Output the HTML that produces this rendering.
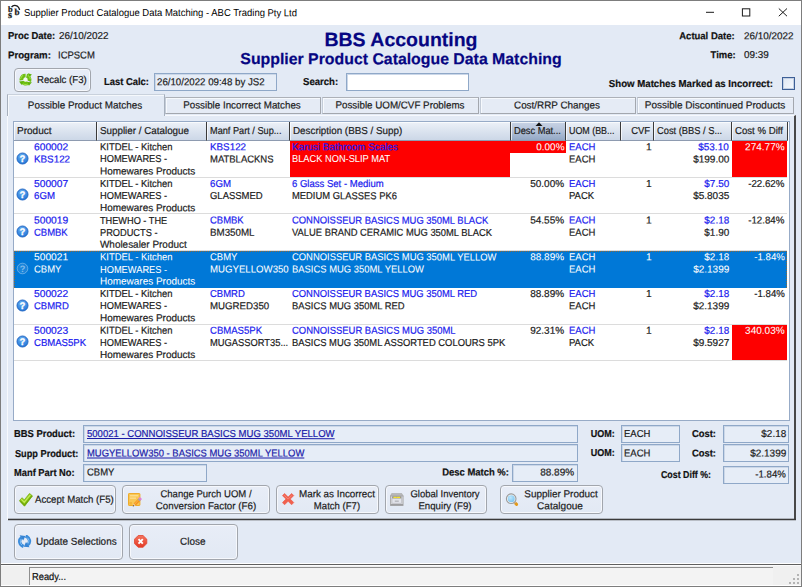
<!DOCTYPE html>
<html>
<head>
<meta charset="utf-8">
<title>Supplier Product Catalogue Data Matching - ABC Trading Pty Ltd</title>
<style>
*{box-sizing:border-box;margin:0;padding:0}
html,body{width:802px;height:587px;overflow:hidden;background:#6b6b6b}
body{font-family:"Liberation Sans",sans-serif;font-size:10.05px;color:#1c1c1c;text-rendering:geometricPrecision;-webkit-text-stroke:0.2px;position:relative}
.abs{position:absolute;white-space:nowrap}
#win{position:absolute;left:0;top:0;width:802px;height:587px;background:#e3eaf5;border:1px solid #7d7d7d}
#titlebar{position:absolute;left:1px;top:1px;width:800px;height:23.6px;background:#fff}
.ttl{color:#000;-webkit-text-stroke:0}
.b{font-weight:bold;color:#111}
.navy{color:#060682}
.blue{color:#1a1aee}
.wht{color:#fff;-webkit-text-stroke:0.05px}
.lnk{color:#1a1aa8;text-decoration:underline}
.stat{color:#111}
.fld{border:1px solid #8fa8c8;background:#e6edf7;box-shadow:inset 1px 1px 0 #cbd7e8}
.btn{border:1px solid #a2a6ad;border-radius:4px;background:linear-gradient(#e8edf7,#e2e9f4);box-shadow:inset 0 0 0 1px #f6f8fc}
.tab{border:1px solid #a3a7ae;border-top-color:#adb1b8;border-left-color:#c4ccd8;background:#e5ebf5;box-shadow:inset 1px 1px 0 #f6f9fd}
</style>
</head>
<body>
<div id="win"></div>
<div id="titlebar"></div>
<svg class="abs" style="left:0px;top:0px" width="24" height="24" viewBox="0 0 24 24"><g font-family="Liberation Serif,serif" font-weight="bold" fill="#1a1a1a" stroke="#1a1a1a" stroke-width="0.25"><text x="8.0" y="11.6" font-size="8.3">b</text><text x="8.0" y="17.6" font-size="10.4">s</text><text x="14.5" y="15.3" font-size="9.1">b</text></g><path d="M11.5 7.2 C13.4 4.4 18.6 4.6 19.6 10" stroke="#1a1a1a" stroke-width="1.3" fill="none"/></svg>
<div class="abs ttl" style="top:8px;line-height:12px;left:24.40px;transform:translateY(0.00px) rotate(0.03deg) scaleX(0.9419);transform-origin:0 0;">Supplier Product Catalogue Data Matching - ABC Trading Pty Ltd</div>
<svg class="abs" style="left:690px;top:0px" width="110" height="24" viewBox="0 0 110 24"><path d="M16 12.3 H24" stroke="#1a1a1a" stroke-width="1"/><rect x="52.4" y="8.8" width="7.4" height="7.2" fill="none" stroke="#1a1a1a" stroke-width="1"/><path d="M88.8 8.5 L97 16.2 M97 8.5 L88.8 16.2" stroke="#1a1a1a" stroke-width="1"/></svg>
<div class="abs b" style="top:31px;line-height:12px;left:7.80px;transform:translateY(0.00px) rotate(0.03deg) scaleX(0.9370);transform-origin:0 0;">Proc Date:</div>
<div class="abs " style="top:31px;line-height:12px;left:58.80px;transform:translateY(0.00px) rotate(0.03deg) scaleX(0.9854);transform-origin:0 0;">26/10/2022</div>
<div class="abs b" style="top:50px;line-height:12px;left:7.80px;transform:translateY(0.40px) rotate(0.03deg) scaleX(0.9599);transform-origin:0 0;">Program:</div>
<div class="abs " style="top:50px;line-height:12px;left:58.40px;transform:translateY(0.40px) rotate(0.03deg) scaleX(0.9430);transform-origin:0 0;">ICPSCM</div>
<div class="abs b navy" style="top:29px;line-height:23px;font-size:19.5px;left:200.90px;width:400px;text-align:center;transform:translateY(0.20px) rotate(0.03deg) scaleX(1.0000);transform-origin:50% 0;">BBS Accounting</div>
<div class="abs b navy" style="top:50px;line-height:19px;font-size:15.85px;left:201.20px;width:400px;text-align:center;transform:translateY(0.20px) rotate(0.03deg) scaleX(1.0000);transform-origin:50% 0;">Supplier Product Catalogue Data Matching</div>
<div class="abs b" style="top:31px;line-height:12px;right:67.50px;transform:translateY(0.30px) rotate(0.03deg) scaleX(0.9443);transform-origin:100% 0;">Actual Date:</div>
<div class="abs " style="top:31px;line-height:12px;left:744.00px;transform:translateY(0.30px) rotate(0.03deg) scaleX(0.9854);transform-origin:0 0;">26/10/2022</div>
<div class="abs b" style="top:50px;line-height:12px;right:66.00px;transform:translateY(0.30px) rotate(0.03deg) scaleX(0.9394);transform-origin:100% 0;">Time:</div>
<div class="abs " style="top:50px;line-height:12px;left:744.00px;transform:translateY(0.00px) rotate(0.03deg) scaleX(0.9854);transform-origin:0 0;">09:39</div>
<div class="btn" style="position:absolute;left:14px;top:68px;width:77px;height:24px;"></div>
<svg class="abs" style="left:18.8px;top:72.8px" width="14" height="14" viewBox="0 0 14 14"><circle cx="6.5" cy="6.6" r="2.2" fill="#f4f8ee"/><circle cx="6.5" cy="6.6" r="4.1" fill="none" stroke="#6dbf12" stroke-width="3.7" stroke-dasharray="6.9 1.69" transform="rotate(-75 6.5 6.6)"/><g fill="#5fb20a"><path d="M9.0 0.3 L12.9 1.6 L10.0 4.6 Z"/><path d="M12.9 9.2 L9.9 12.8 L8.3 9.0 Z"/><path d="M0.1 8.6 L4.2 8.0 L2.6 12.0 Z"/></g><circle cx="6.5" cy="6.6" r="4.9" fill="none" stroke="#a9e454" stroke-width="0.9" stroke-dasharray="4.5 5.76" transform="rotate(-60 6.5 6.6)" opacity="0.9"/></svg>
<div class="abs " style="top:75px;line-height:12px;left:36.60px;transform:translateY(0.00px) rotate(0.03deg) scaleX(0.9571);transform-origin:0 0;">Recalc (F3)</div>
<div class="abs b" style="top:77px;line-height:12px;left:103.50px;transform:translateY(0.00px) rotate(0.03deg) scaleX(0.9351);transform-origin:0 0;">Last Calc:</div>
<div class="fld" style="position:absolute;left:154px;top:73px;width:123px;height:18px;"></div>
<div class="abs " style="top:77px;line-height:12px;left:157.00px;transform:translateY(0.20px) rotate(0.03deg) scaleX(0.9637);transform-origin:0 0;">26/10/2022 09:48 by JS2</div>
<div class="abs b" style="top:77px;line-height:12px;left:303.00px;transform:translateY(0.00px) rotate(0.03deg) scaleX(0.9529);transform-origin:0 0;">Search:</div>
<div class="fld" style="position:absolute;left:346px;top:73px;width:123px;height:18px;background:#fff"></div>
<div class="abs b" style="top:79px;line-height:12px;right:28.70px;transform:translateY(0.00px) rotate(0.03deg) scaleX(0.9599);transform-origin:100% 0;">Show Matches Marked as Incorrect:</div>
<div class="" style="position:absolute;left:782px;top:77px;width:13px;height:13px;border:1px solid #3d5f96;background:linear-gradient(135deg,#dfe7f2,#f6f9fd);box-shadow:inset 0 0 0 1px #c3d0e3"></div>
<div class="" style="position:absolute;left:7px;top:115px;width:789px;height:405px;border-left:1px solid #f7f9fd;border-top:1px solid #f7f9fd;border-right:2px solid #484848;"></div>
<div class="" style="position:absolute;left:8px;top:518px;width:788px;height:1px;background:rgba(60,60,60,.3)"></div>
<div class="" style="position:absolute;left:8px;top:519px;width:788px;height:1px;background:#3a3a3a"></div>
<div class="" style="position:absolute;left:8px;top:520px;width:788px;height:1px;background:rgba(60,60,60,.25)"></div>
<div class="" style="position:absolute;left:7px;top:94px;width:158px;height:22px;border:1px solid #a7b0bd;border-bottom:none;border-top-color:#c9d1dc;background:#e3eaf5;box-shadow:inset 1px 1px 0 #f5f8fc"></div>
<div class="abs " style="top:100px;line-height:12px;left:-114.70px;width:400px;text-align:center;transform:translateY(0.60px) rotate(0.03deg) scaleX(0.9840);transform-origin:50% 0;">Possible Product Matches</div>
<div class="tab" style="position:absolute;left:165px;top:97px;width:156px;height:17px;"></div>
<div class="abs " style="top:100px;line-height:12px;left:42.30px;width:400px;text-align:center;transform:translateY(0.40px) rotate(0.03deg) scaleX(0.9741);transform-origin:50% 0;">Possible Incorrect Matches</div>
<div class="tab" style="position:absolute;left:322px;top:97px;width:157px;height:17px;"></div>
<div class="abs " style="top:100px;line-height:12px;left:199.90px;width:400px;text-align:center;transform:translateY(0.40px) rotate(0.03deg) scaleX(0.9748);transform-origin:50% 0;">Possible UOM/CVF Problems</div>
<div class="tab" style="position:absolute;left:480px;top:97px;width:156px;height:17px;"></div>
<div class="abs " style="top:100px;line-height:12px;left:357.40px;width:400px;text-align:center;transform:translateY(0.40px) rotate(0.03deg) scaleX(0.9829);transform-origin:50% 0;">Cost/RRP Changes</div>
<div class="tab" style="position:absolute;left:637px;top:97px;width:157px;height:17px;"></div>
<div class="abs " style="top:100px;line-height:12px;left:514.70px;width:400px;text-align:center;transform:translateY(0.40px) rotate(0.03deg) scaleX(0.9944);transform-origin:50% 0;">Possible Discontinued Products</div>
<div class="" style="position:absolute;left:13px;top:121px;width:777px;height:300px;background:#fff;border:1px solid #97abc7"></div>
<div class="" style="position:absolute;left:14px;top:122px;width:83px;height:19px;background:linear-gradient(#edf1f8 0%,#dde5f0 45%,#ccd7e7 100%);border-right:1px solid #3a3a3a;border-bottom:1px solid #8e9bb0;box-shadow:inset 1px 1px 0 rgba(255,255,255,.7)"></div>
<div class="abs " style="top:126px;line-height:12px;left:17.40px;transform:translateY(0.00px) rotate(0.03deg) scaleX(0.9978);transform-origin:0 0;">Product</div>
<div class="" style="position:absolute;left:97px;top:122px;width:110px;height:19px;background:linear-gradient(#edf1f8 0%,#dde5f0 45%,#ccd7e7 100%);border-right:1px solid #3a3a3a;border-bottom:1px solid #8e9bb0;box-shadow:inset 1px 1px 0 rgba(255,255,255,.7)"></div>
<div class="abs " style="top:126px;line-height:12px;left:100.40px;transform:translateY(0.00px) rotate(0.03deg) scaleX(0.9775);transform-origin:0 0;">Supplier / Catalogue</div>
<div class="" style="position:absolute;left:207px;top:122px;width:83px;height:19px;background:linear-gradient(#edf1f8 0%,#dde5f0 45%,#ccd7e7 100%);border-right:1px solid #3a3a3a;border-bottom:1px solid #8e9bb0;box-shadow:inset 1px 1px 0 rgba(255,255,255,.7)"></div>
<div class="abs " style="top:126px;line-height:12px;left:210.40px;transform:translateY(0.00px) rotate(0.03deg) scaleX(0.9143);transform-origin:0 0;">Manf Part / Sup...</div>
<div class="" style="position:absolute;left:290px;top:122px;width:221px;height:19px;background:linear-gradient(#edf1f8 0%,#dde5f0 45%,#ccd7e7 100%);border-right:1px solid #3a3a3a;border-bottom:1px solid #8e9bb0;box-shadow:inset 1px 1px 0 rgba(255,255,255,.7)"></div>
<div class="abs " style="top:126px;line-height:12px;left:293.40px;transform:translateY(0.00px) rotate(0.03deg) scaleX(0.9777);transform-origin:0 0;">Description (BBS / Supp)</div>
<div class="" style="position:absolute;left:511px;top:122px;width:55px;height:19px;background:linear-gradient(#c8d3e5 0%,#b3c1d8 50%,#93a8c5 100%);border-right:1px solid #3a3a3a;border-bottom:1px solid #8e9bb0;box-shadow:inset 1px 1px 0 rgba(255,255,255,.7)"></div>
<div class="abs " style="top:126px;line-height:12px;left:514.40px;transform:translateY(0.00px) rotate(0.03deg) scaleX(0.9217);transform-origin:0 0;">Desc Mat...</div>
<div class="" style="position:absolute;left:566px;top:122px;width:55px;height:19px;background:linear-gradient(#edf1f8 0%,#dde5f0 45%,#ccd7e7 100%);border-right:1px solid #3a3a3a;border-bottom:1px solid #8e9bb0;box-shadow:inset 1px 1px 0 rgba(255,255,255,.7)"></div>
<div class="abs " style="top:126px;line-height:12px;left:569.40px;transform:translateY(0.00px) rotate(0.03deg) scaleX(0.8841);transform-origin:0 0;">UOM (BB...</div>
<div class="" style="position:absolute;left:621px;top:122px;width:33px;height:19px;background:linear-gradient(#edf1f8 0%,#dde5f0 45%,#ccd7e7 100%);border-right:1px solid #3a3a3a;border-bottom:1px solid #8e9bb0;box-shadow:inset 1px 1px 0 rgba(255,255,255,.7)"></div>
<div class="abs " style="top:126px;line-height:12px;right:152.20px;transform:translateY(0.00px) rotate(0.03deg) scaleX(0.9430);transform-origin:100% 0;">CVF</div>
<div class="" style="position:absolute;left:654px;top:122px;width:78px;height:19px;background:linear-gradient(#edf1f8 0%,#dde5f0 45%,#ccd7e7 100%);border-right:1px solid #3a3a3a;border-bottom:1px solid #8e9bb0;box-shadow:inset 1px 1px 0 rgba(255,255,255,.7)"></div>
<div class="abs " style="top:126px;line-height:12px;left:657.40px;transform:translateY(0.00px) rotate(0.03deg) scaleX(0.9267);transform-origin:0 0;">Cost (BBS / S...</div>
<div class="" style="position:absolute;left:732px;top:122px;width:56px;height:19px;background:linear-gradient(#edf1f8 0%,#dde5f0 45%,#ccd7e7 100%);border-right:1px solid #3a3a3a;border-bottom:1px solid #8e9bb0;box-shadow:inset 1px 1px 0 rgba(255,255,255,.7)"></div>
<div class="abs " style="top:126px;line-height:12px;left:735.40px;transform:translateY(0.00px) rotate(0.03deg) scaleX(0.9586);transform-origin:0 0;">Cost % Diff</div>
<svg class="abs" style="left:535px;top:122px" width="8" height="4" viewBox="0 0 8 4"><path d="M0.5 4 L4 0.3 L7.5 4 Z" fill="#111"/></svg>
<div style="position:absolute;left:14px;top:176.7px;width:773px;height:1px;background:#dcdcdc"></div>
<div style="position:absolute;left:290px;top:141.0px;width:220px;height:35.7px;background:#fe0000"></div>
<div style="position:absolute;left:510px;top:141.0px;width:56px;height:12px;background:#fe0000"></div>
<div style="position:absolute;left:732px;top:141.0px;width:55px;height:35.7px;background:#fe0000"></div>
<svg class="abs" style="left:15.5px;top:151.7px" width="13" height="13" viewBox="0 0 13 13"><defs><radialGradient id="qg" cx="0.45" cy="0.3" r="0.75"><stop offset="0" stop-color="#6db3f2"/><stop offset="1" stop-color="#1c72d6"/></radialGradient></defs><circle cx="6.5" cy="6.5" r="5.5" fill="url(#qg)" stroke="#2468c4" stroke-width="1"/><text x="6.5" y="9.9" text-anchor="middle" font-family="Liberation Sans,sans-serif" font-size="9.5" font-weight="bold" fill="#fff" stroke="#fff" stroke-width="0.3">?</text></svg>
<div class="abs blue" style="top:142px;line-height:12px;left:34.00px;transform:translateY(0.20px) rotate(0.03deg) scaleX(1.0210);transform-origin:0 0;">600002</div>
<div class="abs blue" style="top:154px;line-height:12px;left:34.00px;transform:translateY(0.40px) rotate(0.03deg) scaleX(0.9785);transform-origin:0 0;">KBS122</div>
<div class="abs " style="top:142px;line-height:12px;left:99.60px;transform:translateY(0.20px) rotate(0.03deg) scaleX(0.9385);transform-origin:0 0;">KITDEL - Kitchen</div>
<div class="abs " style="top:154px;line-height:12px;left:99.60px;transform:translateY(0.40px) rotate(0.03deg) scaleX(0.9226);transform-origin:0 0;">HOMEWARES -</div>
<div class="abs " style="top:166px;line-height:12px;left:99.60px;transform:translateY(0.40px) rotate(0.03deg) scaleX(0.9921);transform-origin:0 0;">Homewares Products</div>
<div class="abs blue" style="top:142px;line-height:12px;left:209.60px;transform:translateY(0.20px) rotate(0.03deg) scaleX(0.9785);transform-origin:0 0;">KBS122</div>
<div class="abs " style="top:154px;line-height:12px;left:209.60px;transform:translateY(0.40px) rotate(0.03deg) scaleX(0.9430);transform-origin:0 0;">MATBLACKNS</div>
<div class="abs blue" style="top:142px;line-height:12px;left:292.30px;transform:translateY(0.20px) rotate(0.03deg) scaleX(0.9822);transform-origin:0 0;">Karusi Bathroom Scales</div>
<div class="abs wht" style="top:154px;line-height:12px;left:292.30px;transform:translateY(0.40px) rotate(0.03deg) scaleX(0.9228);transform-origin:0 0;">BLACK NON-SLIP MAT</div>
<div class="abs wht" style="top:142px;line-height:12px;right:237.50px;transform:translateY(0.20px) rotate(0.03deg) scaleX(0.9895);transform-origin:100% 0;">0.00%</div>
<div class="abs blue" style="top:142px;line-height:12px;left:569.00px;transform:translateY(0.20px) rotate(0.03deg) scaleX(0.9430);transform-origin:0 0;">EACH</div>
<div class="abs " style="top:154px;line-height:12px;left:569.00px;transform:translateY(0.40px) rotate(0.03deg) scaleX(0.9430);transform-origin:0 0;">EACH</div>
<div class="abs " style="top:142px;line-height:12px;right:150.70px;transform:translateY(0.20px) rotate(0.03deg) scaleX(1.0210);transform-origin:100% 0;">1</div>
<div class="abs blue" style="top:142px;line-height:12px;right:73.00px;transform:translateY(0.20px) rotate(0.03deg) scaleX(0.9918);transform-origin:100% 0;">$53.10</div>
<div class="abs " style="top:154px;line-height:12px;right:73.00px;transform:translateY(0.40px) rotate(0.03deg) scaleX(0.9963);transform-origin:100% 0;">$199.00</div>
<div class="abs wht" style="top:142px;line-height:12px;right:17.40px;transform:translateY(0.20px) rotate(0.03deg) scaleX(0.9984);transform-origin:100% 0;">274.77%</div>
<div style="position:absolute;left:14px;top:213.4px;width:773px;height:1px;background:#dcdcdc"></div>
<svg class="abs" style="left:15.5px;top:188.4px" width="13" height="13" viewBox="0 0 13 13"><defs><radialGradient id="qg" cx="0.45" cy="0.3" r="0.75"><stop offset="0" stop-color="#6db3f2"/><stop offset="1" stop-color="#1c72d6"/></radialGradient></defs><circle cx="6.5" cy="6.5" r="5.5" fill="url(#qg)" stroke="#2468c4" stroke-width="1"/><text x="6.5" y="9.9" text-anchor="middle" font-family="Liberation Sans,sans-serif" font-size="9.5" font-weight="bold" fill="#fff" stroke="#fff" stroke-width="0.3">?</text></svg>
<div class="abs blue" style="top:178px;line-height:12px;left:34.00px;transform:translateY(0.90px) rotate(0.03deg) scaleX(1.0210);transform-origin:0 0;">500007</div>
<div class="abs blue" style="top:191px;line-height:12px;left:34.00px;transform:translateY(0.10px) rotate(0.03deg) scaleX(0.9630);transform-origin:0 0;">6GM</div>
<div class="abs " style="top:178px;line-height:12px;left:99.60px;transform:translateY(0.90px) rotate(0.03deg) scaleX(0.9385);transform-origin:0 0;">KITDEL - Kitchen</div>
<div class="abs " style="top:191px;line-height:12px;left:99.60px;transform:translateY(0.10px) rotate(0.03deg) scaleX(0.9226);transform-origin:0 0;">HOMEWARES -</div>
<div class="abs " style="top:203px;line-height:12px;left:99.60px;transform:translateY(0.10px) rotate(0.03deg) scaleX(0.9921);transform-origin:0 0;">Homewares Products</div>
<div class="abs blue" style="top:178px;line-height:12px;left:209.60px;transform:translateY(0.90px) rotate(0.03deg) scaleX(0.9630);transform-origin:0 0;">6GM</div>
<div class="abs " style="top:191px;line-height:12px;left:209.60px;transform:translateY(0.10px) rotate(0.03deg) scaleX(0.9430);transform-origin:0 0;">GLASSMED</div>
<div class="abs blue" style="top:178px;line-height:12px;left:292.30px;transform:translateY(0.90px) rotate(0.03deg) scaleX(0.9487);transform-origin:0 0;">6 Glass Set - Medium</div>
<div class="abs " style="top:191px;line-height:12px;left:292.30px;transform:translateY(0.10px) rotate(0.03deg) scaleX(0.9348);transform-origin:0 0;">MEDIUM GLASSES PK6</div>
<div class="abs " style="top:178px;line-height:12px;right:237.50px;transform:translateY(0.90px) rotate(0.03deg) scaleX(0.9947);transform-origin:100% 0;">50.00%</div>
<div class="abs blue" style="top:178px;line-height:12px;left:569.00px;transform:translateY(0.90px) rotate(0.03deg) scaleX(0.9430);transform-origin:0 0;">EACH</div>
<div class="abs " style="top:191px;line-height:12px;left:569.00px;transform:translateY(0.10px) rotate(0.03deg) scaleX(0.9430);transform-origin:0 0;">PACK</div>
<div class="abs " style="top:178px;line-height:12px;right:150.70px;transform:translateY(0.90px) rotate(0.03deg) scaleX(1.0210);transform-origin:100% 0;">1</div>
<div class="abs blue" style="top:178px;line-height:12px;right:73.00px;transform:translateY(0.90px) rotate(0.03deg) scaleX(0.9854);transform-origin:100% 0;">$7.50</div>
<div class="abs " style="top:191px;line-height:12px;right:73.00px;transform:translateY(0.10px) rotate(0.03deg) scaleX(0.9963);transform-origin:100% 0;">$5.8035</div>
<div class="abs " style="top:178px;line-height:12px;right:17.40px;transform:translateY(0.90px) rotate(0.03deg) scaleX(0.9684);transform-origin:100% 0;">-22.62%</div>
<div style="position:absolute;left:14px;top:250.1px;width:773px;height:1px;background:#dcdcdc"></div>
<svg class="abs" style="left:15.5px;top:225.1px" width="13" height="13" viewBox="0 0 13 13"><defs><radialGradient id="qg" cx="0.45" cy="0.3" r="0.75"><stop offset="0" stop-color="#6db3f2"/><stop offset="1" stop-color="#1c72d6"/></radialGradient></defs><circle cx="6.5" cy="6.5" r="5.5" fill="url(#qg)" stroke="#2468c4" stroke-width="1"/><text x="6.5" y="9.9" text-anchor="middle" font-family="Liberation Sans,sans-serif" font-size="9.5" font-weight="bold" fill="#fff" stroke="#fff" stroke-width="0.3">?</text></svg>
<div class="abs blue" style="top:215px;line-height:12px;left:34.00px;transform:translateY(0.60px) rotate(0.03deg) scaleX(1.0210);transform-origin:0 0;">500019</div>
<div class="abs blue" style="top:227px;line-height:12px;left:34.00px;transform:translateY(0.80px) rotate(0.03deg) scaleX(0.9430);transform-origin:0 0;">CBMBK</div>
<div class="abs " style="top:215px;line-height:12px;left:99.60px;transform:translateY(0.60px) rotate(0.03deg) scaleX(0.9136);transform-origin:0 0;">THEWHO - THE</div>
<div class="abs " style="top:227px;line-height:12px;left:99.60px;transform:translateY(0.80px) rotate(0.03deg) scaleX(0.9191);transform-origin:0 0;">PRODUCTS -</div>
<div class="abs " style="top:239px;line-height:12px;left:99.60px;transform:translateY(0.80px) rotate(0.03deg) scaleX(0.9885);transform-origin:0 0;">Wholesaler Product</div>
<div class="abs blue" style="top:215px;line-height:12px;left:209.60px;transform:translateY(0.60px) rotate(0.03deg) scaleX(0.9430);transform-origin:0 0;">CBMBK</div>
<div class="abs " style="top:227px;line-height:12px;left:209.60px;transform:translateY(0.80px) rotate(0.03deg) scaleX(0.9716);transform-origin:0 0;">BM350ML</div>
<div class="abs blue" style="top:215px;line-height:12px;left:292.30px;transform:translateY(0.60px) rotate(0.03deg) scaleX(0.9363);transform-origin:0 0;">CONNOISSEUR BASICS MUG 350ML BLACK</div>
<div class="abs " style="top:227px;line-height:12px;left:292.30px;transform:translateY(0.80px) rotate(0.03deg) scaleX(0.9333);transform-origin:0 0;">VALUE BRAND CERAMIC MUG 350ML BLACK</div>
<div class="abs " style="top:215px;line-height:12px;right:237.50px;transform:translateY(0.60px) rotate(0.03deg) scaleX(0.9947);transform-origin:100% 0;">54.55%</div>
<div class="abs blue" style="top:215px;line-height:12px;left:569.00px;transform:translateY(0.60px) rotate(0.03deg) scaleX(0.9430);transform-origin:0 0;">EACH</div>
<div class="abs " style="top:227px;line-height:12px;left:569.00px;transform:translateY(0.80px) rotate(0.03deg) scaleX(0.9430);transform-origin:0 0;">EACH</div>
<div class="abs " style="top:215px;line-height:12px;right:150.70px;transform:translateY(0.60px) rotate(0.03deg) scaleX(1.0210);transform-origin:100% 0;">1</div>
<div class="abs blue" style="top:215px;line-height:12px;right:73.00px;transform:translateY(0.60px) rotate(0.03deg) scaleX(0.9854);transform-origin:100% 0;">$2.18</div>
<div class="abs " style="top:227px;line-height:12px;right:73.00px;transform:translateY(0.80px) rotate(0.03deg) scaleX(0.9854);transform-origin:100% 0;">$1.90</div>
<div class="abs " style="top:215px;line-height:12px;right:17.40px;transform:translateY(0.60px) rotate(0.03deg) scaleX(0.9684);transform-origin:100% 0;">-12.84%</div>
<div style="position:absolute;left:14px;top:251.1px;width:773px;height:36.7px;background:#0078d7;border-top:1px dotted #8a6a3c;border-left:1px dotted #8a6a3c;border-right:1px dotted #8a6a3c"></div>
<svg class="abs" style="left:15.5px;top:261.8px" width="13" height="13" viewBox="0 0 13 13"><circle cx="6.5" cy="6.5" r="5.3" fill="rgba(255,255,255,0.10)" stroke="rgba(255,255,255,0.33)" stroke-width="1"/><text x="6.5" y="9.8" text-anchor="middle" font-family="Liberation Sans,sans-serif" font-size="9.2" font-weight="bold" fill="rgba(255,255,255,0.45)">?</text></svg>
<div class="abs wht" style="top:252px;line-height:12px;left:34.00px;transform:translateY(0.30px) rotate(0.03deg) scaleX(1.0210);transform-origin:0 0;">500021</div>
<div class="abs wht" style="top:264px;line-height:12px;left:34.00px;transform:translateY(0.50px) rotate(0.03deg) scaleX(0.9430);transform-origin:0 0;">CBMY</div>
<div class="abs wht" style="top:252px;line-height:12px;left:99.60px;transform:translateY(0.30px) rotate(0.03deg) scaleX(0.9385);transform-origin:0 0;">KITDEL - Kitchen</div>
<div class="abs wht" style="top:264px;line-height:12px;left:99.60px;transform:translateY(0.50px) rotate(0.03deg) scaleX(0.9226);transform-origin:0 0;">HOMEWARES -</div>
<div class="abs wht" style="top:276px;line-height:12px;left:99.60px;transform:translateY(0.50px) rotate(0.03deg) scaleX(0.9921);transform-origin:0 0;">Homewares Products</div>
<div class="abs wht" style="top:252px;line-height:12px;left:209.60px;transform:translateY(0.30px) rotate(0.03deg) scaleX(0.9430);transform-origin:0 0;">CBMY</div>
<div class="abs wht" style="top:264px;line-height:12px;left:209.60px;transform:translateY(0.50px) rotate(0.03deg) scaleX(0.9589);transform-origin:0 0;">MUGYELLOW350</div>
<div class="abs wht" style="top:252px;line-height:12px;left:292.30px;transform:translateY(0.30px) rotate(0.03deg) scaleX(0.9366);transform-origin:0 0;">CONNOISSEUR BASICS MUG 350ML YELLOW</div>
<div class="abs wht" style="top:264px;line-height:12px;left:292.30px;transform:translateY(0.50px) rotate(0.03deg) scaleX(0.9379);transform-origin:0 0;">BASICS MUG 350ML YELLOW</div>
<div class="abs wht" style="top:252px;line-height:12px;right:237.50px;transform:translateY(0.30px) rotate(0.03deg) scaleX(0.9947);transform-origin:100% 0;">88.89%</div>
<div class="abs wht" style="top:252px;line-height:12px;left:569.00px;transform:translateY(0.30px) rotate(0.03deg) scaleX(0.9430);transform-origin:0 0;">EACH</div>
<div class="abs wht" style="top:264px;line-height:12px;left:569.00px;transform:translateY(0.50px) rotate(0.03deg) scaleX(0.9430);transform-origin:0 0;">EACH</div>
<div class="abs wht" style="top:252px;line-height:12px;right:150.70px;transform:translateY(0.30px) rotate(0.03deg) scaleX(1.0210);transform-origin:100% 0;">1</div>
<div class="abs wht" style="top:252px;line-height:12px;right:73.00px;transform:translateY(0.30px) rotate(0.03deg) scaleX(0.9854);transform-origin:100% 0;">$2.18</div>
<div class="abs wht" style="top:264px;line-height:12px;right:73.00px;transform:translateY(0.50px) rotate(0.03deg) scaleX(0.9963);transform-origin:100% 0;">$2.1399</div>
<div class="abs wht" style="top:252px;line-height:12px;right:17.40px;transform:translateY(0.30px) rotate(0.03deg) scaleX(0.9591);transform-origin:100% 0;">-1.84%</div>
<div style="position:absolute;left:14px;top:323.5px;width:773px;height:1px;background:#dcdcdc"></div>
<svg class="abs" style="left:15.5px;top:298.5px" width="13" height="13" viewBox="0 0 13 13"><defs><radialGradient id="qg" cx="0.45" cy="0.3" r="0.75"><stop offset="0" stop-color="#6db3f2"/><stop offset="1" stop-color="#1c72d6"/></radialGradient></defs><circle cx="6.5" cy="6.5" r="5.5" fill="url(#qg)" stroke="#2468c4" stroke-width="1"/><text x="6.5" y="9.9" text-anchor="middle" font-family="Liberation Sans,sans-serif" font-size="9.5" font-weight="bold" fill="#fff" stroke="#fff" stroke-width="0.3">?</text></svg>
<div class="abs blue" style="top:289px;line-height:12px;left:34.00px;transform:translateY(0.00px) rotate(0.03deg) scaleX(1.0210);transform-origin:0 0;">500022</div>
<div class="abs blue" style="top:301px;line-height:12px;left:34.00px;transform:translateY(0.20px) rotate(0.03deg) scaleX(0.9430);transform-origin:0 0;">CBMRD</div>
<div class="abs " style="top:289px;line-height:12px;left:99.60px;transform:translateY(0.00px) rotate(0.03deg) scaleX(0.9385);transform-origin:0 0;">KITDEL - Kitchen</div>
<div class="abs " style="top:301px;line-height:12px;left:99.60px;transform:translateY(0.20px) rotate(0.03deg) scaleX(0.9226);transform-origin:0 0;">HOMEWARES -</div>
<div class="abs " style="top:313px;line-height:12px;left:99.60px;transform:translateY(0.20px) rotate(0.03deg) scaleX(0.9921);transform-origin:0 0;">Homewares Products</div>
<div class="abs blue" style="top:289px;line-height:12px;left:209.60px;transform:translateY(0.00px) rotate(0.03deg) scaleX(0.9430);transform-origin:0 0;">CBMRD</div>
<div class="abs " style="top:301px;line-height:12px;left:209.60px;transform:translateY(0.20px) rotate(0.03deg) scaleX(0.9643);transform-origin:0 0;">MUGRED350</div>
<div class="abs blue" style="top:289px;line-height:12px;left:292.30px;transform:translateY(0.00px) rotate(0.03deg) scaleX(0.9359);transform-origin:0 0;">CONNOISSEUR BASICS MUG 350ML RED</div>
<div class="abs " style="top:301px;line-height:12px;left:292.30px;transform:translateY(0.20px) rotate(0.03deg) scaleX(0.9370);transform-origin:0 0;">BASICS MUG 350ML RED</div>
<div class="abs " style="top:289px;line-height:12px;right:237.50px;transform:translateY(0.00px) rotate(0.03deg) scaleX(0.9947);transform-origin:100% 0;">88.89%</div>
<div class="abs blue" style="top:289px;line-height:12px;left:569.00px;transform:translateY(0.00px) rotate(0.03deg) scaleX(0.9430);transform-origin:0 0;">EACH</div>
<div class="abs " style="top:301px;line-height:12px;left:569.00px;transform:translateY(0.20px) rotate(0.03deg) scaleX(0.9430);transform-origin:0 0;">EACH</div>
<div class="abs " style="top:289px;line-height:12px;right:150.70px;transform:translateY(0.00px) rotate(0.03deg) scaleX(1.0210);transform-origin:100% 0;">1</div>
<div class="abs blue" style="top:289px;line-height:12px;right:73.00px;transform:translateY(0.00px) rotate(0.03deg) scaleX(0.9854);transform-origin:100% 0;">$2.18</div>
<div class="abs " style="top:301px;line-height:12px;right:73.00px;transform:translateY(0.20px) rotate(0.03deg) scaleX(0.9963);transform-origin:100% 0;">$2.1399</div>
<div class="abs " style="top:289px;line-height:12px;right:17.40px;transform:translateY(0.00px) rotate(0.03deg) scaleX(0.9591);transform-origin:100% 0;">-1.84%</div>
<div style="position:absolute;left:14px;top:360.2px;width:773px;height:1px;background:#dcdcdc"></div>
<div style="position:absolute;left:732px;top:324.5px;width:55px;height:35.7px;background:#fe0000"></div>
<svg class="abs" style="left:15.5px;top:335.2px" width="13" height="13" viewBox="0 0 13 13"><defs><radialGradient id="qg" cx="0.45" cy="0.3" r="0.75"><stop offset="0" stop-color="#6db3f2"/><stop offset="1" stop-color="#1c72d6"/></radialGradient></defs><circle cx="6.5" cy="6.5" r="5.5" fill="url(#qg)" stroke="#2468c4" stroke-width="1"/><text x="6.5" y="9.9" text-anchor="middle" font-family="Liberation Sans,sans-serif" font-size="9.5" font-weight="bold" fill="#fff" stroke="#fff" stroke-width="0.3">?</text></svg>
<div class="abs blue" style="top:325px;line-height:12px;left:34.00px;transform:translateY(0.70px) rotate(0.03deg) scaleX(1.0210);transform-origin:0 0;">500023</div>
<div class="abs blue" style="top:337px;line-height:12px;left:34.00px;transform:translateY(0.90px) rotate(0.03deg) scaleX(0.9510);transform-origin:0 0;">CBMAS5PK</div>
<div class="abs " style="top:325px;line-height:12px;left:99.60px;transform:translateY(0.70px) rotate(0.03deg) scaleX(0.9385);transform-origin:0 0;">KITDEL - Kitchen</div>
<div class="abs " style="top:337px;line-height:12px;left:99.60px;transform:translateY(0.90px) rotate(0.03deg) scaleX(0.9226);transform-origin:0 0;">HOMEWARES -</div>
<div class="abs " style="top:349px;line-height:12px;left:99.60px;transform:translateY(0.90px) rotate(0.03deg) scaleX(0.9921);transform-origin:0 0;">Homewares Products</div>
<div class="abs blue" style="top:325px;line-height:12px;left:209.60px;transform:translateY(0.70px) rotate(0.03deg) scaleX(0.9510);transform-origin:0 0;">CBMAS5PK</div>
<div class="abs " style="top:337px;line-height:12px;left:209.60px;transform:translateY(0.90px) rotate(0.03deg) scaleX(0.9292);transform-origin:0 0;">MUGASSORT35...</div>
<div class="abs blue" style="top:325px;line-height:12px;left:292.30px;transform:translateY(0.70px) rotate(0.03deg) scaleX(0.9388);transform-origin:0 0;">CONNOISSEUR BASICS MUG 350ML</div>
<div class="abs " style="top:337px;line-height:12px;left:292.30px;transform:translateY(0.90px) rotate(0.03deg) scaleX(0.9358);transform-origin:0 0;">BASICS MUG 350ML ASSORTED COLOURS 5PK</div>
<div class="abs " style="top:325px;line-height:12px;right:237.50px;transform:translateY(0.70px) rotate(0.03deg) scaleX(0.9947);transform-origin:100% 0;">92.31%</div>
<div class="abs blue" style="top:325px;line-height:12px;left:569.00px;transform:translateY(0.70px) rotate(0.03deg) scaleX(0.9430);transform-origin:0 0;">EACH</div>
<div class="abs " style="top:337px;line-height:12px;left:569.00px;transform:translateY(0.90px) rotate(0.03deg) scaleX(0.9430);transform-origin:0 0;">PACK</div>
<div class="abs " style="top:325px;line-height:12px;right:150.70px;transform:translateY(0.70px) rotate(0.03deg) scaleX(1.0210);transform-origin:100% 0;">1</div>
<div class="abs blue" style="top:325px;line-height:12px;right:73.00px;transform:translateY(0.70px) rotate(0.03deg) scaleX(0.9854);transform-origin:100% 0;">$2.18</div>
<div class="abs " style="top:337px;line-height:12px;right:73.00px;transform:translateY(0.90px) rotate(0.03deg) scaleX(0.9963);transform-origin:100% 0;">$9.5927</div>
<div class="abs wht" style="top:325px;line-height:12px;right:17.40px;transform:translateY(0.70px) rotate(0.03deg) scaleX(0.9984);transform-origin:100% 0;">340.03%</div>
<div class="abs b" style="top:429px;line-height:12px;left:14.00px;transform:translateY(0.00px) rotate(0.03deg) scaleX(0.9356);transform-origin:0 0;">BBS Product:</div>
<div class="fld" style="position:absolute;left:83px;top:425px;width:495px;height:18px;"></div>
<div class="abs lnk" style="top:429px;line-height:12px;left:86.80px;transform:translateY(0.00px) rotate(0.03deg) scaleX(0.9495);transform-origin:0 0;">500021 - CONNOISSEUR BASICS MUG 350ML YELLOW</div>
<div class="abs b" style="top:448px;line-height:12px;left:14.50px;transform:translateY(0.50px) rotate(0.03deg) scaleX(0.9145);transform-origin:0 0;">Supp Product:</div>
<div class="fld" style="position:absolute;left:83px;top:444px;width:495px;height:18px;"></div>
<div class="abs lnk" style="top:448px;line-height:12px;left:86.80px;transform:translateY(0.50px) rotate(0.03deg) scaleX(0.9378);transform-origin:0 0;">MUGYELLOW350 - BASICS MUG 350ML YELLOW</div>
<div class="abs b" style="top:467px;line-height:12px;left:14.00px;transform:translateY(0.60px) rotate(0.03deg) scaleX(0.9282);transform-origin:0 0;">Manf Part No:</div>
<div class="fld" style="position:absolute;left:83px;top:464px;width:124px;height:18px;"></div>
<div class="abs " style="top:467px;line-height:12px;left:87.00px;transform:translateY(0.60px) rotate(0.03deg) scaleX(0.9430);transform-origin:0 0;">CBMY</div>
<div class="abs b" style="top:467px;line-height:12px;right:293.40px;transform:translateY(0.60px) rotate(0.03deg) scaleX(0.9409);transform-origin:100% 0;">Desc Match %:</div>
<div class="fld" style="position:absolute;left:512px;top:464px;width:66px;height:18px;"></div>
<div class="abs " style="top:467px;line-height:12px;right:228.00px;transform:translateY(0.60px) rotate(0.03deg) scaleX(0.9947);transform-origin:100% 0;">88.89%</div>
<div class="abs b" style="top:429px;line-height:12px;right:187.60px;transform:translateY(0.00px) rotate(0.03deg) scaleX(0.8962);transform-origin:100% 0;">UOM:</div>
<div class="fld" style="position:absolute;left:621px;top:425px;width:59px;height:18px;"></div>
<div class="abs " style="top:429px;line-height:12px;left:624.40px;transform:translateY(0.00px) rotate(0.03deg) scaleX(0.9430);transform-origin:0 0;">EACH</div>
<div class="abs b" style="top:448px;line-height:12px;right:187.60px;transform:translateY(0.50px) rotate(0.03deg) scaleX(0.8962);transform-origin:100% 0;">UOM:</div>
<div class="fld" style="position:absolute;left:621px;top:444px;width:59px;height:18px;"></div>
<div class="abs " style="top:448px;line-height:12px;left:624.40px;transform:translateY(0.50px) rotate(0.03deg) scaleX(0.9430);transform-origin:0 0;">EACH</div>
<div class="abs b" style="top:429px;line-height:12px;left:692.40px;transform:translateY(0.00px) rotate(0.03deg) scaleX(0.9341);transform-origin:0 0;">Cost:</div>
<div class="fld" style="position:absolute;left:723px;top:425px;width:66px;height:18px;"></div>
<div class="abs " style="top:429px;line-height:12px;right:16.00px;transform:translateY(0.00px) rotate(0.03deg) scaleX(0.9854);transform-origin:100% 0;">$2.18</div>
<div class="abs b" style="top:448px;line-height:12px;left:692.40px;transform:translateY(0.50px) rotate(0.03deg) scaleX(0.9341);transform-origin:0 0;">Cost:</div>
<div class="fld" style="position:absolute;left:723px;top:444px;width:66px;height:18px;"></div>
<div class="abs " style="top:448px;line-height:12px;right:16.00px;transform:translateY(0.50px) rotate(0.03deg) scaleX(0.9963);transform-origin:100% 0;">$2.1399</div>
<div class="abs b" style="top:469px;line-height:12px;left:660.50px;transform:translateY(0.50px) rotate(0.03deg) scaleX(0.8782);transform-origin:0 0;">Cost Diff %:</div>
<div class="fld" style="position:absolute;left:723px;top:466px;width:66px;height:18px;"></div>
<div class="abs " style="top:469px;line-height:12px;right:16.00px;transform:translateY(0.50px) rotate(0.03deg) scaleX(0.9591);transform-origin:100% 0;">-1.84%</div>
<div class="btn" style="position:absolute;left:14px;top:485px;width:102px;height:29px;"></div>
<svg class="abs" style="left:18.9px;top:492.9px" width="14" height="14" viewBox="0 0 14 14"><path d="M0.3 7.7 L3.1 4.7 L5.3 6.9 L10.5 0.4 L13.5 2.9 L5.5 13.2 Z" fill="#8fc814" stroke="#76ad0e" stroke-width="0.7" stroke-linejoin="round"/><path d="M0.9 8.4 L5.5 13.2 L13.5 2.9 L12.6 2.2 L5.4 11.2 L1.6 7.6 Z" fill="#6da40c" opacity="0.85"/><path d="M2.6 6.6 L5.3 9.2 L11 2.4" fill="none" stroke="#c2ea5a" stroke-width="1.3" stroke-linecap="round" stroke-linejoin="round"/></svg>
<div class="abs " style="top:494px;line-height:12px;left:35.40px;transform:translateY(0.80px) rotate(0.03deg) scaleX(0.9598);transform-origin:0 0;">Accept Match (F5)</div>
<div class="btn" style="position:absolute;left:122px;top:485px;width:148px;height:29px;"></div>
<svg class="abs" style="left:128px;top:493.2px" width="15" height="14" viewBox="0 0 15 14"><rect x="0.5" y="0.5" width="11.4" height="12" rx="0.6" fill="#f9c755" stroke="#eeab2c" stroke-width="1"/><rect x="2" y="2.2" width="8.2" height="1.1" fill="#fde29a"/><rect x="2" y="4.6" width="6" height="1.1" fill="#fde29a"/><rect x="1.4" y="9" width="2.6" height="2.6" fill="#f3b63c"/><path d="M5.6 10.6 L10.4 5.4 L12.6 7.4 L7.8 12.6 Z" fill="#f5951d"/><path d="M6.4 11.4 L11.2 6.2" stroke="#fbbf5a" stroke-width="0.8"/><path d="M10.4 5.4 L11.8 3.9 L14 5.9 L12.6 7.4 Z" fill="#e07fd6"/><path d="M9.6 6.3 L10.4 5.4 L12.6 7.4 L11.8 8.3 Z" fill="#98a6ba"/><path d="M5.6 10.6 L7.8 12.6 L4.8 13.4 Z" fill="#e9c9a0"/><path d="M5.2 12.1 L6.2 13.0 L4.8 13.4 Z" fill="#3a3028"/></svg>
<div class="abs " style="top:489px;line-height:12px;left:5.80px;width:400px;text-align:center;transform:translateY(0.20px) rotate(0.03deg) scaleX(0.9484);transform-origin:50% 0;">Change Purch UOM /</div>
<div class="abs " style="top:501px;line-height:12px;left:5.80px;width:400px;text-align:center;transform:translateY(0.20px) rotate(0.03deg) scaleX(0.9714);transform-origin:50% 0;">Conversion Factor (F6)</div>
<div class="btn" style="position:absolute;left:276px;top:485px;width:103px;height:29px;"></div>
<svg class="abs" style="left:282px;top:492.9px" width="13" height="13" viewBox="0 0 13 13"><path d="M0.4 2.6 L2.6 0.4 L6.1 3.9 L9.6 0.4 L11.8 2.6 L8.3 6.1 L11.8 9.6 L9.6 11.8 L6.1 8.3 L2.6 11.8 L0.4 9.6 L3.9 6.1 Z" fill="#f0614e" stroke="#ee4f3e" stroke-width="0.5" stroke-linejoin="round"/><path d="M2.2 2.2 L6.1 6.1 L10 2.2" fill="none" stroke="#f78f7e" stroke-width="1" opacity="0.8"/></svg>
<div class="abs " style="top:489px;line-height:12px;left:136.70px;width:400px;text-align:center;transform:translateY(0.20px) rotate(0.03deg) scaleX(0.9788);transform-origin:50% 0;">Mark as Incorrect</div>
<div class="abs " style="top:501px;line-height:12px;left:136.70px;width:400px;text-align:center;transform:translateY(0.20px) rotate(0.03deg) scaleX(0.9518);transform-origin:50% 0;">Match (F7)</div>
<div class="btn" style="position:absolute;left:385px;top:485px;width:102px;height:29px;"></div>
<svg class="abs" style="left:390.4px;top:493px" width="14" height="14" viewBox="0 0 14 14"><path d="M1.6 0.6 L11.8 0.6 L13.2 3.2 L0.4 3.2 Z" fill="#b9b9ba" stroke="#a3a3a4" stroke-width="0.6"/><rect x="0.5" y="3" width="12.6" height="9.4" fill="#d6d6d9" stroke="#a9a9ab" stroke-width="0.9"/><rect x="2.2" y="3.4" width="9.2" height="2.2" fill="#8c8c8e"/><path d="M3 5.4 L3.6 3.8 L6.4 3.8 L6.8 4.4 L7.2 3.8 L10 3.8 L10.6 5.4 Z" fill="#f4e02e"/><rect x="2" y="5.6" width="9.6" height="4.6" fill="#e3e4ea" stroke="#b7b8be" stroke-width="0.6"/><rect x="4.8" y="7.6" width="4" height="1.1" fill="#a9aab0"/><rect x="0.6" y="11" width="12.4" height="1.6" fill="#9d9d9f"/></svg>
<div class="abs " style="top:489px;line-height:12px;left:245.40px;width:400px;text-align:center;transform:translateY(0.20px) rotate(0.03deg) scaleX(0.9457);transform-origin:50% 0;">Global Inventory</div>
<div class="abs " style="top:501px;line-height:12px;left:245.40px;width:400px;text-align:center;transform:translateY(0.20px) rotate(0.03deg) scaleX(0.9610);transform-origin:50% 0;">Enquiry (F9)</div>
<div class="btn" style="position:absolute;left:500px;top:485px;width:103px;height:29px;"></div>
<svg class="abs" style="left:505.2px;top:492.8px" width="14" height="14" viewBox="0 0 14 14"><defs><radialGradient id="mg" cx="0.4" cy="0.35" r="0.75"><stop offset="0" stop-color="#bfe6fb"/><stop offset="1" stop-color="#74c2f1"/></radialGradient></defs><path d="M10.2 10.0 L11.6 11.4" stroke="#e39a1c" stroke-width="3" stroke-linecap="round"/><path d="M9.0 8.8 L10.2 10" stroke="#c4c4c4" stroke-width="2.2"/><circle cx="6.2" cy="5.7" r="4.8" fill="#f2f2f2" stroke="#9b9b9b" stroke-width="1.1"/><circle cx="6.2" cy="5.7" r="3.5" fill="url(#mg)"/></svg>
<div class="abs " style="top:489px;line-height:12px;left:360.80px;width:400px;text-align:center;transform:translateY(0.20px) rotate(0.03deg) scaleX(0.9870);transform-origin:50% 0;">Supplier Product</div>
<div class="abs " style="top:501px;line-height:12px;left:360.40px;width:400px;text-align:center;transform:translateY(0.20px) rotate(0.03deg) scaleX(1.0002);transform-origin:50% 0;">Catalgoue</div>
<div class="btn" style="position:absolute;left:14px;top:524px;width:109px;height:36px;"></div>
<svg class="abs" style="left:17.6px;top:534.6px" width="14" height="14" viewBox="0 0 14 14"><g id="ua"><path d="M5.6 11.6 C1.0 9.6 0.6 5.2 3.6 2.6" fill="none" stroke="#3b8cdb" stroke-width="3.3"/><path d="M1.6 0.3 L7.4 0.9 L5.2 5.6 Z" fill="#3684d4"/><path d="M4.0 10.0 C2.0 8.4 1.8 5.8 3.2 4.0" fill="none" stroke="#8dc6f5" stroke-width="0.9"/></g><use href="#ua" transform="rotate(180 6.6 6.3)"/></svg>
<div class="abs " style="top:536px;line-height:12px;left:35.50px;transform:translateY(0.70px) rotate(0.03deg) scaleX(0.9887);transform-origin:0 0;">Update Selections</div>
<div class="btn" style="position:absolute;left:129px;top:524px;width:109px;height:36px;"></div>
<svg class="abs" style="left:134.1px;top:534.5px" width="14" height="14" viewBox="0 0 14 14"><defs><linearGradient id="cg" x1="0" y1="0" x2="0" y2="1"><stop offset="0" stop-color="#f4735e"/><stop offset="1" stop-color="#e23a26"/></linearGradient></defs><path d="M4.2 0.5 L9 0.5 L12.8 4.2 L12.8 8.6 L9 12.3 L4.2 12.3 L0.5 8.6 L0.5 4.2 Z" fill="url(#cg)" stroke="#e2452f" stroke-width="0.8"/><path d="M4.5 4.2 L8.8 8.6 M8.8 4.2 L4.5 8.6" stroke="#fff" stroke-width="1.9" stroke-linecap="butt"/></svg>
<div class="abs " style="top:536px;line-height:12px;left:179.60px;transform:translateY(0.70px) rotate(0.03deg) scaleX(0.9918);transform-origin:0 0;">Close</div>
<div class="" style="position:absolute;left:1px;top:563px;width:800px;height:23px;background:#f0f0f0;border-top:1px solid #fff;border-bottom:1px solid #fff"></div>
<div class="" style="position:absolute;left:1px;top:564px;width:800px;height:1px;background:#5f5f5f"></div>
<div class="" style="position:absolute;left:1px;top:565px;width:800px;height:1px;background:#fbfbfb"></div>
<div class="" style="position:absolute;left:29px;top:567px;width:744px;height:18px;border-left:1px solid #8e8e8e;border-top:1px solid #8e8e8e;background:#f3f3f3"></div>
<div class="abs stat" style="top:571px;line-height:12px;left:31.80px;transform:translateY(0.50px) rotate(0.03deg) scaleX(0.9282);transform-origin:0 0;">Ready...</div>
<svg class="abs" style="left:788px;top:573px" width="12" height="12" viewBox="0 0 12 12"><g fill="#b4b4b4"><rect x="9" y="9" width="2" height="2"/><rect x="5" y="9" width="2" height="2"/><rect x="1" y="9" width="2" height="2"/><rect x="9" y="5" width="2" height="2"/><rect x="5" y="5" width="2" height="2"/><rect x="9" y="1" width="2" height="2"/></g></svg>
</body>
</html>
